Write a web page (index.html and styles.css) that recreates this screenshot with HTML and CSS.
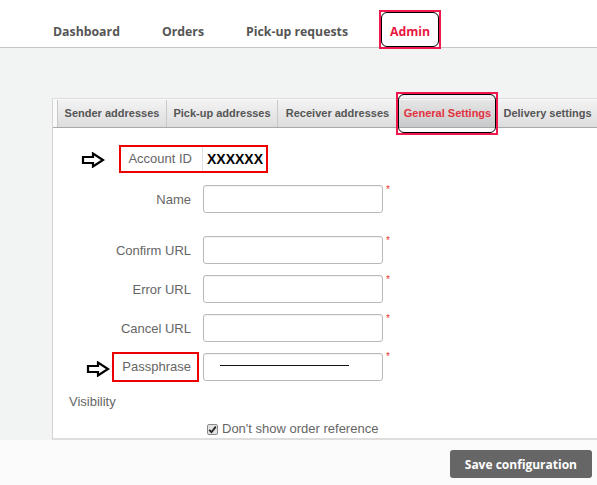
FILE: index.html
```html
<!DOCTYPE html>
<html lang="en">
<head>
    <meta charset="UTF-8">
    <meta name="viewport" content="width=device-width, initial-scale=1.0">
    <title>Admin - General Settings</title>
    <link rel="stylesheet" href="styles.css">
</head>
<body>

<!-- Top menu -->
<header class="topnav">
    <nav class="menu">
        <a class="menu-item" href="#">Dashboard</a>
        <a class="menu-item" href="#">Orders</a>
        <a class="menu-item" href="#">Pick-up requests</a>
        <a class="menu-item active" href="#">Admin<span class="mark"></span></a>
    </nav>
</header>

<div class="admin-area">
    <section class="panel">
        <!-- Settings tabs -->
        <ul class="tabs">
            <li class="tab tab-sender">Sender addresses</li>
            <li class="tab tab-pickup">Pick-up addresses</li>
            <li class="tab tab-receiver">Receiver addresses</li>
            <li class="tab tab-general active">General Settings<span class="mark"></span></li>
            <li class="tab tab-delivery">Delivery settings</li>
        </ul>

        <form class="settings">
            <svg class="arrow arrow-account" width="24" height="16" viewBox="0 0 24 16">
                <path d="M2 5 H12 V1.5 L22 8 L12 14.5 V11 H2 Z" fill="#fff" stroke="#000" stroke-width="2.2" stroke-linejoin="miter"/>
            </svg>
            <div class="row account-row">
                <div class="account">
                    <span class="account-label">Account ID</span>
                    <span class="account-value">XXXXXX</span>
                </div>
            </div>

            <div class="row name-row">
                <label class="label">Name</label>
                <input class="field" type="text">
                <span class="req">*</span>
            </div>
            <div class="row">
                <label class="label">Confirm URL</label>
                <input class="field" type="text">
                <span class="req">*</span>
            </div>
            <div class="row">
                <label class="label">Error URL</label>
                <input class="field" type="text">
                <span class="req">*</span>
            </div>
            <div class="row">
                <label class="label">Cancel URL</label>
                <input class="field" type="text">
                <span class="req">*</span>
            </div>

            <svg class="arrow arrow-pass" width="24" height="16" viewBox="0 0 24 16">
                <path d="M2 5 H12 V1.5 L22 8 L12 14.5 V11 H2 Z" fill="#fff" stroke="#000" stroke-width="2.2" stroke-linejoin="miter"/>
            </svg>
            <div class="row pass-row">
                <label class="label"><span class="label-mark">Passphrase</span></label>
                <div class="field-wrap">
                    <input class="field" type="password">
                    <span class="redacted"></span>
                </div>
                <span class="req">*</span>
            </div>

            <div class="section-title">Visibility</div>
            <div class="check-row">
                <span class="checkbox">
                    <svg width="9" height="9" viewBox="0 0 9 9"><path d="M1.2 4.8 L3.5 7.2 L7.8 1.6" fill="none" stroke="#222" stroke-width="1.8"/></svg>
                </span>
                <span>Don't show order reference</span>
            </div>
        </form>
    </section>
</div>

<div class="actions">
    <button class="save-btn" type="button">Save configuration</button>
</div>

</body>
</html>
```

FILE: styles.css
```css
body {
    margin: 0;
    width: 597px;
    height: 485px;
    overflow: hidden;
    font-family: "Liberation Sans", Arial, sans-serif;
    background-color: #fbfbfb;
}

/* Top menu */
.topnav {
    background-color: #fff;
    height: 47px;
    border-bottom: 1px solid #c6c6c6;
}
.menu {
    display: flex;
    gap: 42px;
    padding: 23px 0 0 53px;
}
.menu-item {
    position: relative;
    font-family: "Open Sans", sans-serif;
    font-weight: 700;
    font-size: 12.3px;
    line-height: 17px;
    color: #555;
    text-decoration: none;
}
.menu-item.active {
    color: #e8173f;
}
.mark {
    position: absolute;
    box-sizing: border-box;
    border: 2px solid #f2174c;
    z-index: 2;
}
.mark::after {
    content: "";
    position: absolute;
    inset: 0;
    border: 1.5px solid #000;
    border-radius: 6px;
}
.menu-item .mark {
    left: -11px;
    top: -13px;
    width: 62px;
    height: 39px;
}

/* Grey admin area */
.admin-area {
    box-sizing: border-box;
    height: 392px;
    padding: 50px 0 0 52px;
    background-color: #f2f3f3;
}
.panel {
    box-sizing: border-box;
    width: 560px;
    height: 342px;
    background-color: #fff;
    border-top: 1px solid #dcdcdc;
    border-left: 1px solid #d4d4d4;
    border-bottom: 2px solid #dedede;
}

/* Tabs */
.tabs {
    display: flex;
    list-style: none;
    margin: 0;
    padding: 1px 0 0 4px;
    border-bottom: 1px solid #a9a9a9;
    background-color: #fafafa;
}
.tab {
    position: relative;
    box-sizing: border-box;
    flex: none;
    text-align: center;
    line-height: 27px;
    font-size: 11px;
    font-weight: bold;
    color: #555;
    white-space: nowrap;
    background: linear-gradient(#f3f3f3, #dddddd);
    border-left: 1px solid #c9c9c9;
}
.tab-sender { width: 109px; }
.tab-pickup { width: 111px; }
.tab-receiver { width: 120px; }
.tab-general { width: 100px; }
.tab-delivery { width: 100px; }
.tab.active {
    color: #e2323f;
    background: linear-gradient(#e6e6e6, #c8c9ca);
}
.tab .mark {
    left: -2px;
    top: -8px;
    width: 102px;
    height: 43px;
}

/* Settings form */
.settings {
    position: relative;
    padding: 17px 0 0 16px;
}
.row {
    display: flex;
    align-items: center;
    height: 28px;
    margin-bottom: 11px;
}
.account-row {
    margin-bottom: 12px;
}
.name-row {
    margin-bottom: 23px;
}
.label {
    width: 122px;
    margin-right: 12px;
    text-align: right;
    font-size: 13px;
    color: #666;
}
.field {
    box-sizing: border-box;
    width: 180px;
    height: 28px;
    margin: 0;
    border: 1px solid #b9b9b9;
    border-radius: 3px;
    background-color: #fff;
    box-shadow: inset 0 1px 1px rgba(0, 0, 0, 0.05);
}
.req {
    align-self: flex-start;
    margin: -1px 0 0 3px;
    font-size: 10px;
    color: #e8322f;
}

.account {
    display: flex;
    box-sizing: border-box;
    height: 28px;
    margin-left: 50px;
    border: 2px solid #ee0000;
}
.account-label {
    box-sizing: border-box;
    width: 82px;
    padding-right: 10px;
    text-align: right;
    line-height: 24px;
    font-size: 13px;
    color: #666;
    border-right: 1px solid #e2e2e2;
}
.account-value {
    padding: 0 3px 0 4px;
    line-height: 24px;
    font-size: 14px;
    font-weight: bold;
    color: #000;
}

.pass-row {
    height: 30px;
    margin-top: -1px;
}
.label-mark {
    display: inline-block;
    box-sizing: border-box;
    height: 30px;
    line-height: 26px;
    padding: 0 6px 0 8px;
    margin-right: -8px;
    border: 2px solid #ee0000;
}
.field-wrap {
    position: relative;
}
.redacted {
    position: absolute;
    left: 17px;
    top: 12px;
    width: 129px;
    height: 1px;
    background-color: #111;
}

.arrow {
    position: absolute;
}
.arrow-account {
    left: 28px;
    top: 24px;
}
.arrow-pass {
    left: 33px;
    top: 233px;
}

.section-title {
    margin-top: 12px;
    line-height: 16px;
    font-size: 13px;
    color: #666;
}
.check-row {
    display: flex;
    align-items: center;
    gap: 4px;
    margin: 11px 0 0 138px;
    line-height: 16px;
    font-size: 13px;
    color: #666;
}
.checkbox {
    display: flex;
    align-items: center;
    justify-content: center;
    box-sizing: border-box;
    width: 11px;
    height: 11px;
    border: 1px solid #8a8a8a;
    border-radius: 2px;
    background-color: #e3e3e3;
}

/* Bottom actions */
.actions {
    display: flex;
    justify-content: flex-end;
    padding: 10px 5px 0 0;
}
.save-btn {
    height: 28px;
    padding: 0 15px;
    border: none;
    border-radius: 3px;
    background-color: #666;
    color: #fff;
    font-family: "Open Sans", sans-serif;
    font-weight: 700;
    font-size: 12px;
    cursor: pointer;
}
```
